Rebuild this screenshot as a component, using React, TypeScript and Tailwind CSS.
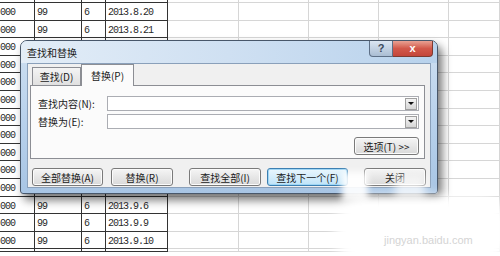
import React from "react";

const cjk = { fontFamily: '"Noto Sans CJK SC", "Liberation Sans", sans-serif' };
const mono = { fontFamily: '"Liberation Mono", "Noto Sans CJK SC", monospace' };

// rows of the sheet; rows hidden behind the dialog keep only column A
const rows: { date?: string; part?: boolean }[] = [
  { part: true },
  { date: "2013.8.20" },
  { date: "2013.8.21" },
  {},
  {},
  {},
  {},
  {},
  {},
  {},
  {},
  {},
  { date: "2013.9.6" },
  { date: "2013.9.9" },
  { date: "2013.9.10" },
  { part: true },
];

function SheetRow({ date, part }: { date?: string; part?: boolean }) {
  const dark = "border-r border-b border-[#333] overflow-hidden whitespace-nowrap";
  const light = "border-r border-b border-[#d6d6d6]";
  return (
    <div
      className={`grid grid-cols-[35px_47px_24px_62px_71px_70px_70px_70px_51px] ${
        part ? "h-[3px]" : "h-[17.6px]"
      } text-[10px] leading-[19px] text-[#2a2a2a] tracking-[-1px]`}
      style={mono}
    >
      <div className={dark}>{part ? "" : "000"}</div>
      <div className={`${dark} pl-[2px]`}>{date ? "99" : ""}</div>
      <div className={`${dark} pl-[2px]`}>{date ? "6" : ""}</div>
      <div className={`${dark} pl-[2px]`}>{date ?? ""}</div>
      <div className={light} />
      <div className={light} />
      <div className={light} />
      <div className={light} />
      <div className={light} />
    </div>
  );
}

function Btn({
  children,
  w,
  def,
  className = "",
}: {
  children: React.ReactNode;
  w: string;
  def?: boolean;
  className?: string;
}) {
  return (
    <div
      className={`${w} h-[18px] rounded-[3px] border flex items-center justify-center text-[10px] text-[#1a1a1a] ${
        def
          ? "border-[#3c7fb1] bg-gradient-to-b from-[#eaf6fd] to-[#bfe3f8] shadow-[inset_0_0_0_1px_#9fd6f5]"
          : "border-[#7a7a7a] bg-gradient-to-b from-[#f5f5f5] to-[#d9d9d9] shadow-[inset_0_0_0_1px_#fbfbfb]"
      } ${className}`}
      style={cjk}
    >
      {children}
    </div>
  );
}

function Combo() {
  return (
    <div className="w-[312px] h-[15px] border border-[#abadb3] bg-white flex justify-end items-center pr-[1px]">
      <div className="w-[12px] h-[12px] border border-[#a0a0a0] bg-gradient-to-b from-[#f4f4f4] to-[#d6d6d6] flex items-center justify-center">
        <div className="w-0 h-0 border-l-[3px] border-r-[3px] border-t-[3px] border-l-transparent border-r-transparent border-t-[#111]" />
      </div>
    </div>
  );
}

export default function App() {
  return (
    <div className="relative w-[500px] h-[256px] overflow-hidden bg-white">
      {/* spreadsheet behind */}
      <div className="flex flex-col">
        {rows.map((r, i) => (
          <SheetRow key={i} date={r.date} part={r.part} />
        ))}
      </div>

      {/* find & replace dialog */}
      <div className="absolute left-[20px] top-[40px] w-[418px] h-[154px] rounded-t-[7px] rounded-b-[3px] border border-[#48576a] bg-gradient-to-b from-[#cfe0f1] via-[#b9d2ec] to-[#a8c5e4] shadow-[4px_6px_10px_rgba(0,0,0,0.55)] flex flex-col px-[6px] pb-[5px]">
        <div className="h-[22px] flex items-center bg-gradient-to-r from-[#e3edf7] via-[#cfe0f2] to-[#b8d2ec] -mx-[6px] pl-[6px] rounded-t-[6px]">
          <span className="text-[10px] text-[#1a1a1a]" style={cjk}>
            查找和替换
          </span>
        </div>
        <div className="absolute top-0 right-[4px] flex">
          <div
            className="w-[24px] h-[16px] rounded-bl-[4px] border border-t-0 border-[#5d6f86] bg-gradient-to-b from-[#dbe6f2] to-[#aabdd3] flex items-center justify-center text-[11px] font-bold text-[#3c4a5c]"
            style={{ fontFamily: '"Liberation Sans", sans-serif' }}
          >
            ?
          </div>
          <div
            className="w-[40px] h-[16px] rounded-br-[4px] border border-l-0 border-t-0 border-[#7d3a30] bg-gradient-to-b from-[#e8a193] via-[#d2584a] to-[#c4463a] flex items-center justify-center text-[11px] font-bold text-white"
            style={{ fontFamily: '"Liberation Sans", sans-serif' }}
          >
            x
          </div>
        </div>

        <div className="flex-1 bg-[#f0f0f0] border border-[#8aa0ba] flex flex-col">
          {/* tabs */}
          <div className="h-[21px] flex items-start pl-[4px]">
            <div
              className="mt-[3px] w-[49px] h-[18px] border border-b-0 border-[#8c8e94] bg-gradient-to-b from-[#f4f4f4] to-[#e0e0e0] flex items-center justify-center text-[10px] text-[#1a1a1a]"
              style={cjk}
            >
              查找(D)
            </div>
            <div
              className="relative z-10 w-[53px] h-[22px] border border-b-0 border-[#8c8e94] bg-[#fbfbfb] flex items-center justify-center text-[10px] text-[#1a1a1a]"
              style={cjk}
            >
              替换(P)
            </div>
          </div>
          {/* panel */}
          <div className="ml-[2px] w-[395px] h-[74px] border border-[#8c8e94] bg-[#fbfbfb] flex flex-col pl-[7px] pt-[10px]">
            <div className="flex items-center h-[15px]">
              <div className="w-[69px] text-[10px] text-[#1a1a1a]" style={cjk}>
                查找内容(N):
              </div>
              <Combo />
            </div>
            <div className="flex items-center h-[15px] mt-[3px]">
              <div className="w-[69px] text-[10px] text-[#1a1a1a]" style={cjk}>
                替换为(E):
              </div>
              <Combo />
            </div>
            <div className="flex justify-end pr-[5px] mt-[8px]">
              <Btn w="w-[65px]" className="h-[17px]">
                选项(T) &gt;&gt;
              </Btn>
            </div>
          </div>
          {/* buttons */}
          <div className="flex mt-[9px] pl-[4px]">
            <Btn w="w-[71px]">全部替换(A)</Btn>
            <Btn w="w-[62px]" className="ml-[8px]">
              替换(R)
            </Btn>
            <Btn w="w-[72px]" className="ml-[16px]">
              查找全部(I)
            </Btn>
            <Btn w="w-[81px]" def className="ml-[6px]">
              查找下一个(F)
            </Btn>
            <Btn w="w-[62px]" className="ml-[16px]">
              关闭
            </Btn>
          </div>
        </div>
      </div>

      {/* watermark smudges */}
      <div className="absolute left-[335px] top-[196px] w-[175px] h-[70px] rounded-[30px] bg-white blur-[6px]" />
      <div className="absolute left-[342px] top-[172px] w-[26px] h-[30px] bg-white/90 blur-[3px]" />
      <div className="absolute left-[395px] top-[176px] w-[30px] h-[24px] bg-white/70 blur-[4px]" />
      <div
        className="absolute left-[384px] top-[232px] text-[11px] text-[#d4d4d4]"
        style={{ fontFamily: '"Liberation Sans", sans-serif' }}
      >
        jingyan.baidu.com
      </div>
    </div>
  );
}
